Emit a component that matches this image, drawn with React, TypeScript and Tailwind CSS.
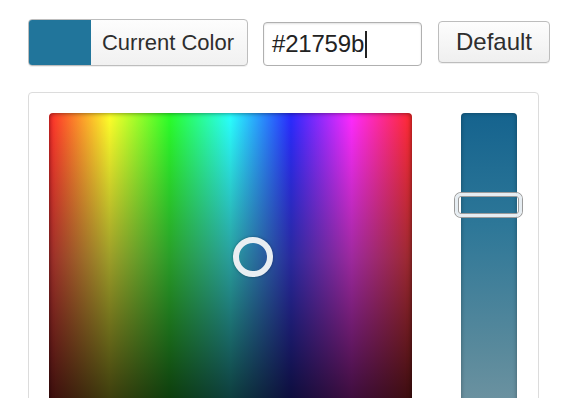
export default function App() {
  return (
    <div className="h-[398px] overflow-hidden bg-white font-['Liberation_Sans',Arial,sans-serif] text-[#333]">
      {/* ─── TOP ROW ─────────────────────────────────────────────── */}
      <div className="flex items-start pl-[28px] pt-[19px]">
        <button className="flex h-[47px] w-[220px] overflow-hidden rounded-[4px] border border-[#bdbdbd] bg-gradient-to-b from-[#fdfdfd] to-[#f1f1f1] shadow-[0_1px_0_rgba(0,0,0,0.06)]">
          <span className="h-full w-[62px] bg-[#21759b]" />
          <span className="flex flex-1 items-center justify-center pr-[2px] text-[22px] leading-none text-[#2e2e2e]">
            Current Color
          </span>
        </button>

        <div className="ml-[15px] mt-[3px] flex h-[44px] w-[159px] items-center rounded-[4px] border border-[#b0b0b0] bg-white pl-[8px] shadow-[inset_0_1px_2px_rgba(0,0,0,0.12)]">
          <span className="text-[24px] leading-none tracking-[-0.2px] text-[#222]">#21759b</span>
          <span className="ml-[1px] h-[27px] w-[2px] bg-[#222]" />
        </div>

        <button className="ml-[16px] mt-[2px] flex h-[42px] w-[112px] items-center justify-center rounded-[4px] border border-[#bdbdbd] bg-gradient-to-b from-[#fdfdfd] to-[#efefef] text-[24px] leading-none text-[#2e2e2e] shadow-[0_1px_0_rgba(0,0,0,0.06)]">
          Default
        </button>
      </div>

      {/* ─── PICKER PANEL ────────────────────────────────────────── */}
      <div className="ml-[28px] mt-[26px] flex w-[511px] rounded-[4px] border border-[#dcdcdc] pl-[20px] pr-[21px] pt-[20px]">
        {/* square */}
        <div className="relative h-[320px] w-[363px] overflow-hidden rounded-[4px] bg-[linear-gradient(to_right,#ff2a2a_0%,#ffff2a_16.67%,#2aff2a_33.33%,#2affff_50%,#2a2aff_66.67%,#ff2aff_83.33%,#ff2a2a_100%)]">
          <div className="absolute inset-0 bg-[linear-gradient(to_bottom,rgba(0,0,0,0)_0%,rgba(40,40,40,0.45)_45%,rgba(0,0,0,0.85)_100%)]" />
          <div className="absolute inset-0 rounded-[4px] shadow-[inset_0_0_5px_rgba(0,0,0,0.55)]" />
          <div className="absolute left-[184px] top-[124px] h-[40px] w-[40px] rounded-full border-[6px] border-[#e9eef2] shadow-[0_0_3px_rgba(0,0,0,0.35)]" />
        </div>

        {/* slider */}
        <div className="relative ml-[49px] h-[320px] w-[56px] rounded-[4px] bg-[linear-gradient(to_bottom,#15638e_0%,#2d7798_35%,#5a8a9c_75%,#7797a3_100%)] shadow-[inset_0_0_4px_rgba(0,0,0,0.35)]">
          <div className="absolute left-[-6px] top-[80px] h-[24px] w-[67px] rounded-[6px] border-[3px] border-[#e6edf2] shadow-[0_0_0_1px_#9b9b9b,inset_0_0_0_1px_#9b9b9b]" />
        </div>
      </div>
    </div>
  )
}
